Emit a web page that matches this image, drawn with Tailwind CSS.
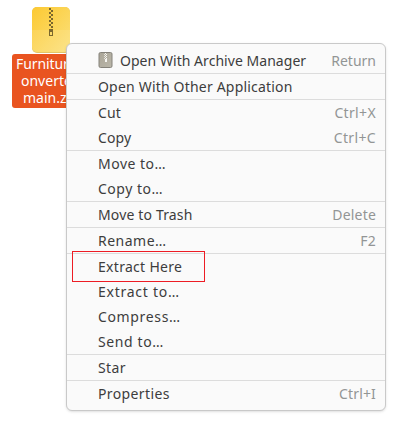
<!DOCTYPE html>
<html lang="en"><head><meta charset="utf-8"><title>Files</title>
<script src="https://cdn.jsdelivr.net/npm/@tailwindcss/browser@4"></script></head>
<body class="relative w-[416px] h-[429px] overflow-hidden bg-white font-['Noto_Sans',sans-serif] text-[14px]">
<div class="absolute left-[12px] top-[7px] w-[78px] flex flex-col items-center">
<svg class="w-[38px] h-[46px]" viewBox="0 0 38 46"><defs><linearGradient id="y" x1="0" y1="0" x2="1" y2="1"><stop offset="0" stop-color="#fcc932"/><stop offset="1" stop-color="#fbe17c"/></linearGradient></defs><rect width="38" height="46" rx="5" fill="#e3c568"/><rect width="38" height="45" rx="5" fill="url(#y)"/><path d="M0 23h38v17q0 5-5 5H5q-5 0-5-5z" fill="#fff" opacity=".1"/>
<g fill="#7a672e"><path d="M17 1h2v2h-2zM19 3h2v2h-2zM17 5h2v2h-2zM19 7h2v2h-2zM17 9h2v2h-2zM19 11h2v2h-2zM17 13h2v2h-2zM19 15h2v2h-2zM17 17h2v2h-2zM19 19h2v2h-2z"/><path fill-rule="evenodd" d="M17 22h4v7h-4zM18 25v3h2v-3z"/></g></svg>
<div class="mt-px w-[78px] h-[54px] rounded-[3px] bg-[#e95420] pt-px text-white leading-[17px] whitespace-nowrap"><div class="pl-[4px] tracking-[-0.1px]">Furniture-C</div><div class="pl-[9px]">onverter-</div><div class="pl-[11px]">main.zip</div></div>
</div>
<div class="absolute left-[66px] top-[43px] w-[320px] h-[368px] rounded-[6px] border border-[#c9c9c9] bg-[#fafafa] py-[4px] text-[#3d3d3d] shadow-sm leading-[25px] whitespace-nowrap [&>div]:h-[25px] [&>div]:flex [&>div]:justify-between [&>div]:pl-[31px] [&>div]:pr-[9px] [&>hr]:border-[#dcdcdc]">
<div><span class="flex items-center gap-[7px]"><svg class="w-[15px] h-[17px] shrink-0" viewBox="0 0 15 17"><defs><linearGradient id="g" x1="0" y1="0" x2="1" y2="1"><stop offset="0" stop-color="#aaa597"/><stop offset="1" stop-color="#bbb7aa"/></linearGradient></defs><rect x="1" y=".5" width="13" height="15" rx="1.5" fill="url(#g)" stroke="#85827a"/><path d="M7 1h1v1H7zM8 2h1v1H8zM7 3h1v1H7zM8 4h1v1H8zM7 5h1v1H7zM8 6h1v1H8zM7 7h2v3H7z" fill="#f6f5f1"/><path d="M6 2h1v1H6zM6 4h1v1H6zM6 6h1v1H6z" fill="#e4e1d8"/></svg><span class="tracking-[0.04px]">Open With Archive Manager</span></span><span class="text-[#929595]">Return</span></div><hr>
<div><span class="tracking-[0.19px]">Open With Other Application</span></div><hr>
<div><span class="tracking-[0.1px]">Cut</span><span class="text-[#929595] tracking-[0.35px]">Ctrl+X</span></div><div><span class="tracking-[0.1px]">Copy</span><span class="text-[#929595] tracking-[0.35px]">Ctrl+C</span></div><hr>
<div><span class="tracking-[0.5px]">Move to…</span></div><div><span class="tracking-[0.5px]">Copy to…</span></div><hr>
<div><span class="tracking-[0.15px]">Move to Trash</span><span class="text-[#929595] tracking-[0.2px]">Delete</span></div><hr>
<div><span class="tracking-[0.5px]">Rename…</span><span class="text-[#929595] tracking-[0.3px]">F2</span></div><hr>
<div><span class="tracking-[0.3px]">Extract Here</span></div><div><span class="tracking-[0.75px]">Extract to…</span></div><div><span class="tracking-[0.65px]">Compress…</span></div><div><span class="tracking-[0.6px]">Send to…</span></div><hr>
<div><span class="tracking-[0.35px]">Star</span></div><hr><div><span class="tracking-[0.38px]">Properties</span><span class="text-[#929595] tracking-[0.15px]">Ctrl+I</span></div>
</div>
<div class="absolute left-[72px] top-[251px] w-[133px] h-[31px] border border-[#ed1c24]"></div>
</body></html>
